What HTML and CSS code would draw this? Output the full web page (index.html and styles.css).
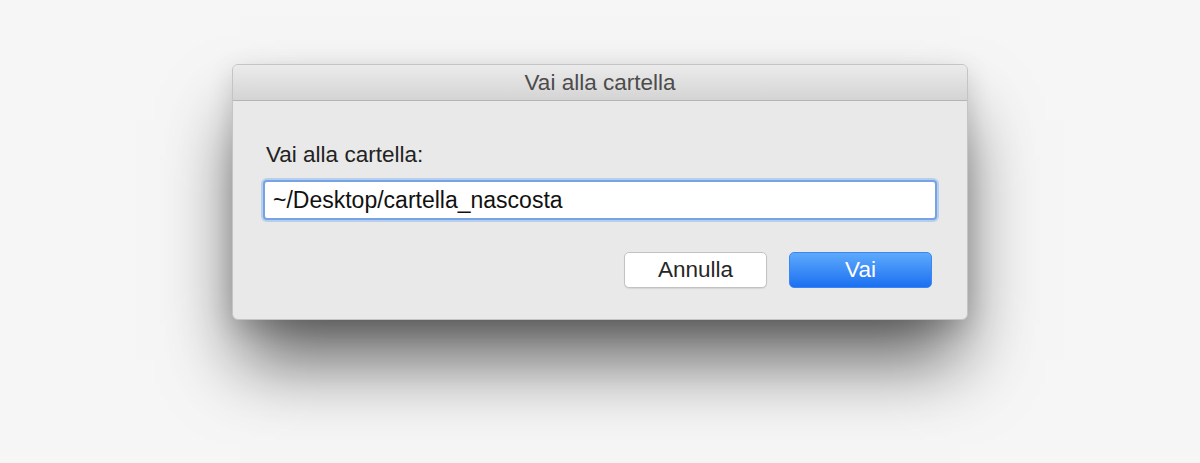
FILE: index.html
```html
<!DOCTYPE html>
<html lang="it">
<head>
<meta charset="utf-8">
<title>Vai alla cartella</title>
<link rel="stylesheet" href="styles.css">
</head>
<body>
<div class="stage">
  <div class="dialog">
    <div class="titlebar">Vai alla cartella</div>
    <div class="content">
      <label class="label" for="path">Vai alla cartella:</label>
      <input class="field" id="path" type="text" value="~/Desktop/cartella_nascosta">
      <div class="actions">
        <button class="btn btn-cancel" type="button">Annulla</button>
        <button class="btn btn-go" type="button">Vai</button>
      </div>
    </div>
  </div>
</div>
</body>
</html>
```
FILE: styles.css
```css
html, body {
  margin: 0;
  padding: 0;
  height: 100%;
}
body {
  background: #f6f6f6;
  font-family: "Liberation Sans", Arial, sans-serif;
  overflow: hidden;
}
.stage {
  display: flex;
  justify-content: center;
  padding-top: 64px;
}
.dialog {
  width: 736px;
  box-sizing: border-box;
  background: #e9e9e9;
  border: 1px solid #c4c4c4;
  border-radius: 6px;
  box-shadow: 0 48px 70px -8px rgba(0, 0, 0, 0.62), 0 8px 26px rgba(0, 0, 0, 0.14);
  overflow: hidden;
}
.titlebar {
  height: 35px;
  line-height: 36px;
  text-align: center;
  font-size: 22.5px;
  color: #4c4c4c;
  background: linear-gradient(#ebebeb, #d4d4d4);
  border-bottom: 1px solid #b5b5b5;
}
.content {
  display: flex;
  flex-direction: column;
  padding: 40px 32px 31px 29px;
}
.label {
  font-size: 22.5px;
  line-height: 27px;
  color: #222;
  padding-left: 4px;
}
.field {
  margin-top: 12px;
  height: 40px;
  box-sizing: border-box;
  width: 674px;
  border: 2px solid #76a3e4;
  border-radius: 4px;
  box-shadow: 0 0 0 2px rgba(150, 190, 240, 0.6);
  background: #fff;
  font-family: "Liberation Sans", Arial, sans-serif;
  font-size: 23px;
  color: #111;
  padding: 0 8px;
  margin-left: 1px;
  outline: none;
}
.actions {
  margin-top: 32px;
  display: flex;
  justify-content: flex-end;
  gap: 22px;
  padding-right: 3px;
}
.btn {
  width: 143px;
  height: 36px;
  border-radius: 5px;
  font-family: "Liberation Sans", Arial, sans-serif;
  font-size: 22.5px;
  padding: 0;
  cursor: default;
}
.btn-cancel {
  background: #fff;
  border: 1px solid #c2c2c2;
  color: #262626;
  box-shadow: 0 1px 1px rgba(0, 0, 0, 0.08);
}
.btn-go {
  background: linear-gradient(#5daafc, #1c70f1);
  border: 1px solid #3b86f2;
  color: #fff;
}
```
